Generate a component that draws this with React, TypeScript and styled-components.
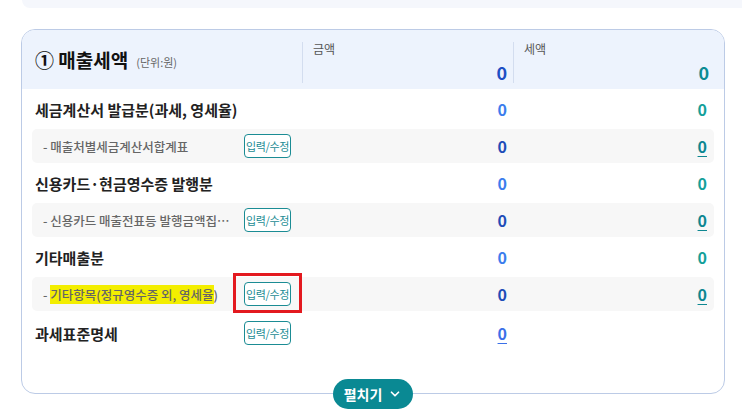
import React from "react";
import styled, {createGlobalStyle} from "styled-components";
import {ChevronDown} from "lucide-react";

const GlobalStyle = createGlobalStyle`
  body {
    margin: 0;
    background: #ffffff;
    overflow: hidden;
    font-family: "Noto Sans CJK KR", "Noto Sans", sans-serif;
  }
`

type Line = {
    kind: "main" | "sub";
    label: string;
    mark?: string;
    button?: boolean;
    marked?: boolean;
    amount?: boolean;
    tax?: boolean;
    tall?: boolean;
};

const lines: Line[] = [
    {kind: "main", label: "세금계산서 발급분(과세, 영세율)", amount: true, tax: true},
    {kind: "sub", label: "- 매출처별세금계산서합계표", button: true, amount: true, tax: true},
    {kind: "main", label: "신용카드·현금영수증 발행분", amount: true, tax: true},
    {kind: "sub", label: "- 신용카드 매출전표등 발행금액집계표", button: true, amount: true, tax: true},
    {kind: "main", label: "기타매출분", amount: true, tax: true},
    {kind: "sub", label: "- ", mark: "기타항목(정규영수증 외, 영세율", button: true, marked: true, amount: true, tax: true},
    {kind: "main", label: "과세표준명세", button: true, amount: true, tall: true},
];

const App = () => {
    return (
        <Page>
            <GlobalStyle/>
            <TopStrip/>
            <Card>
                <Header>
                    <TitleCol>
                        <Title>① 매출세액</Title>
                        <Unit>(단위:원)</Unit>
                    </TitleCol>
                    <HeadCol $pr={6}>
                        <HeadLabel>금액</HeadLabel>
                        <HeadValue $color="#1d4fc4">0</HeadValue>
                    </HeadCol>
                    <HeadCol $pr={15}>
                        <HeadLabel>세액</HeadLabel>
                        <HeadValue $color="#0b8b93">0</HeadValue>
                    </HeadCol>
                </Header>
                <Rows>
                    {lines.map((l, i) => (
                        <Row key={i} $sub={l.kind === "sub"} $tall={l.tall}>
                            <Label $sub={l.kind === "sub"} $wide={!l.button}>
                                {l.label}
                                {l.mark && <><Mark>{l.mark}</Mark>)</>}
                            </Label>
                            {l.button && <EditButton $marked={l.marked}>입력/수정</EditButton>}
                            <Value $color={l.kind === "sub" ? "#1f4db8" : l.tall ? "#3b70e8" : "#3b7ded"}
                                   $link={l.tall}>
                                {l.amount ? "0" : ""}
                            </Value>
                            <Value $color={l.kind === "sub" ? "#0e8791" : "#14a09a"} $link={l.kind === "sub"}>
                                {l.tax ? "0" : ""}
                            </Value>
                        </Row>
                    ))}
                </Rows>
                <Expand>
                    펼치기
                    <ChevronDown size={14} strokeWidth={3}/>
                </Expand>
            </Card>
        </Page>
    )
}

export default App

const Page = styled.div`
  width: 742px;
  height: 418px;
  box-sizing: border-box;
  padding: 0 17px 0 21px;
`
const TopStrip = styled.div`
  height: 8px;
  margin: 0 -17px 21px 1px;
  background: #f5f7fc;
  border-bottom-left-radius: 14px;
`
const Card = styled.div`
  position: relative;
  height: 365px;
  box-sizing: border-box;
  border: 1px solid #bccbe6;
  border-radius: 14px;
`
const Header = styled.div`
  display: grid;
  grid-template-columns: 280px 211px 211px;
  height: 59px;
  background: #edf3fd;
  border-radius: 13px 13px 0 0;
`
const TitleCol = styled.div`
  display: flex;
  align-items: center;
  padding-left: 13px;
  gap: 8px;
`
const Title = styled.div`
  font-size: 19px;
  font-weight: 700;
  color: #111111;
`
const Unit = styled.div`
  font-size: 11px;
  color: #666666;
  margin-top: 5px;
`
const HeadCol = styled.div<{ $pr: number }>`
  margin: 12px 0 6px;
  border-left: 1px solid #d3ddef;
  padding: 0 ${p => p.$pr}px 0 10px;
  display: flex;
  flex-direction: column;
  justify-content: space-between;
`
const HeadLabel = styled.div`
  font-size: 12px;
  line-height: 14px;
  color: #555555;
`
const HeadValue = styled.div<{ $color: string }>`
  font-size: 18px;
  line-height: 22px;
  font-weight: 700;
  text-align: right;
  color: ${p => p.$color};
`
const Rows = styled.div`
  padding: 0 10px;
`
const Row = styled.div<{ $sub?: boolean; $tall?: boolean }>`
  display: grid;
  grid-template-columns: ${p => p.$sub ? 201 : 209}px 47px 1fr 200px;
  align-items: center;
  height: ${p => p.$sub ? 34 : p.$tall ? 44 : 40}px;
  padding: 0 7px 0 ${p => p.$sub ? 11 : 3}px;
  background: ${p => p.$sub ? "#f7f7f7" : "transparent"};
  border-radius: 5px;
`
const Label = styled.div<{ $sub?: boolean; $wide?: boolean }>`
  grid-column: ${p => p.$wide ? "span 2" : "auto"};
  font-size: ${p => p.$sub ? 12.5 : 15}px;
  font-weight: ${p => p.$sub ? 500 : 700};
  color: ${p => p.$sub ? "#666666" : "#222222"};
  white-space: nowrap;
  overflow: hidden;
  text-overflow: ellipsis;
  padding-right: ${p => p.$sub ? 5 : 0}px;
`
const Mark = styled.span`
  background: #f3ee00;
  padding: 1px 0;
`
const EditButton = styled.button<{ $marked?: boolean }>`
  position: relative;
  width: 47px;
  height: 24px;
  padding: 0;
  border: 1px solid #1b8c94;
  border-radius: 4px;
  background: #ffffff;
  color: #1b8c94;
  font-family: inherit;
  font-size: 11px;
  letter-spacing: -0.4px;
  white-space: nowrap;
  cursor: pointer;

  &::after {
    content: "";
    display: ${p => p.$marked ? "block" : "none"};
    position: absolute;
    inset: -10px -12px -8px -12px;
    border: 3px solid #e3191f;
  }
`
const Value = styled.div<{ $color: string; $link?: boolean }>`
  font-size: 16px;
  font-weight: 600;
  text-align: right;
  color: ${p => p.$color};
  text-decoration: ${p => p.$link ? "underline" : "none"};
  text-underline-offset: 3px;
`
const Expand = styled.button`
  position: absolute;
  left: 50%;
  bottom: -16px;
  transform: translateX(-50%);
  display: flex;
  align-items: center;
  justify-content: center;
  gap: 6px;
  width: 80px;
  height: 30px;
  padding: 0;
  border: none;
  border-radius: 15px;
  background: #0a8993;
  color: #ffffff;
  font-family: inherit;
  font-size: 14px;
  font-weight: 700;
`
